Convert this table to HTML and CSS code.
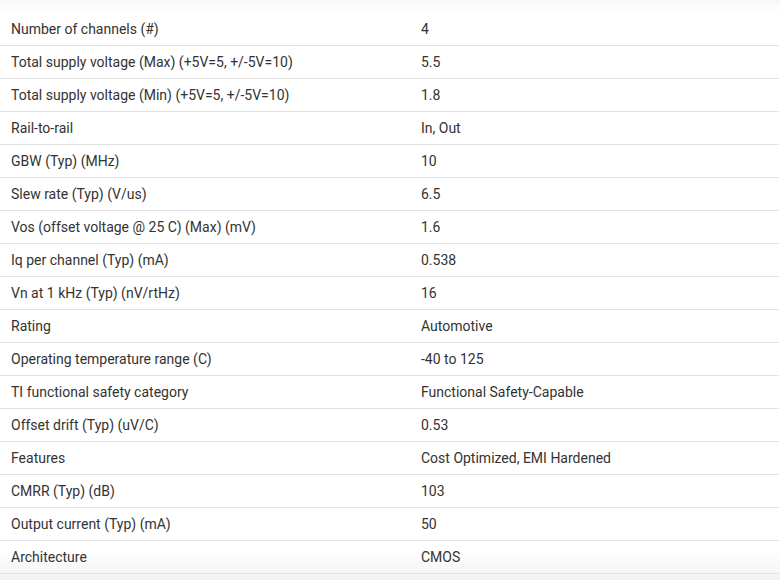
FILE: index.html
```html
<!DOCTYPE html>
<html>
<head>
<meta charset="utf-8">
<link rel="stylesheet" href="styles.css">
</head>
<body>
<div class="topfade"></div>
<div class="table">
  <div class="row"><div class="cell">Number of channels (#)</div><div class="cell">4</div></div>
  <div class="row"><div class="cell">Total supply voltage (Max) (+5V=5, +/-5V=10)</div><div class="cell">5.5</div></div>
  <div class="row"><div class="cell">Total supply voltage (Min) (+5V=5, +/-5V=10)</div><div class="cell">1.8</div></div>
  <div class="row"><div class="cell">Rail-to-rail</div><div class="cell">In, Out</div></div>
  <div class="row"><div class="cell">GBW (Typ) (MHz)</div><div class="cell">10</div></div>
  <div class="row"><div class="cell">Slew rate (Typ) (V/us)</div><div class="cell">6.5</div></div>
  <div class="row"><div class="cell">Vos (offset voltage @ 25 C) (Max) (mV)</div><div class="cell">1.6</div></div>
  <div class="row"><div class="cell">Iq per channel (Typ) (mA)</div><div class="cell">0.538</div></div>
  <div class="row"><div class="cell">Vn at 1 kHz (Typ) (nV/rtHz)</div><div class="cell">16</div></div>
  <div class="row"><div class="cell">Rating</div><div class="cell">Automotive</div></div>
  <div class="row"><div class="cell">Operating temperature range (C)</div><div class="cell">-40 to 125</div></div>
  <div class="row"><div class="cell">TI functional safety category</div><div class="cell">Functional Safety-Capable</div></div>
  <div class="row"><div class="cell">Offset drift (Typ) (uV/C)</div><div class="cell">0.53</div></div>
  <div class="row"><div class="cell">Features</div><div class="cell">Cost Optimized, EMI Hardened</div></div>
  <div class="row"><div class="cell">CMRR (Typ) (dB)</div><div class="cell">103</div></div>
  <div class="row"><div class="cell">Output current (Typ) (mA)</div><div class="cell">50</div></div>
  <div class="row"><div class="cell">Architecture</div><div class="cell">CMOS</div></div>
</div>
</body>
</html>
```

FILE: styles.css
```css
html, body {
  margin: 0;
  padding: 0;
}
html {
  background: #fff;
}
body {
  font-family: Roboto, "Liberation Sans", sans-serif;
  font-size: 14px;
  color: #333;
  width: 780px;
  height: 580px;
  overflow: hidden;
  background: linear-gradient(#fff 0px, #fff 550px, #f2f2f2 580px);
}
.topfade {
  height: 13px;
  background: linear-gradient(#f6f6f6 0px, #fafafa 4px, #fff 13px);
}
.table {
  width: 779px;
}
.row {
  display: grid;
  grid-template-columns: 410px 1fr;
  height: 32px;
  border-bottom: 1px solid #e3e3e3;
  align-items: center;
}
.cell {
  padding-left: 11px;
  line-height: 16px;
}
```
